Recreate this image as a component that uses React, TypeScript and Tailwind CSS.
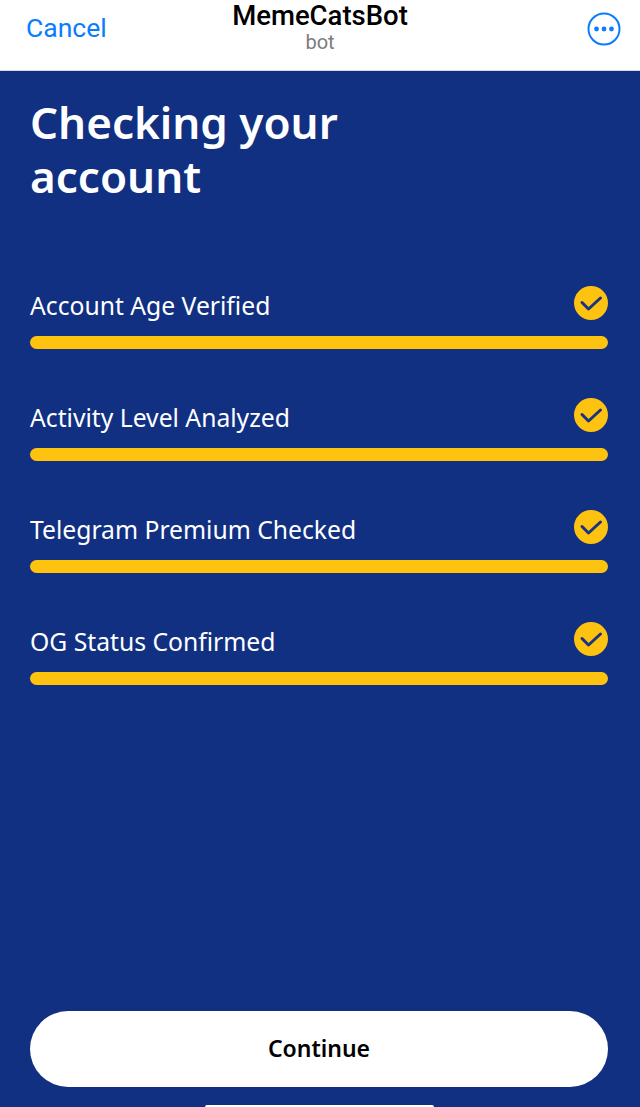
const steps = [
  'Account Age Verified',
  'Activity Level Analyzed',
  'Telegram Premium Checked',
  'OG Status Confirmed',
];

function CheckBadge() {
  return (
    <div className="w-[34px] h-[34px] rounded-full bg-[#fec30f]">
      <svg width="34" height="34" viewBox="0 0 34 34" fill="none">
        <path d="M8 16.5L14.5 23L26.5 12" stroke="#1a3384" strokeWidth="3" strokeLinecap="round" strokeLinejoin="round" />
      </svg>
    </div>
  );
}

export default function App() {
  return (
    <div className="w-[640px] h-[1107px] flex flex-col overflow-hidden bg-[#113082] font-['Noto_Sans',sans-serif]">
      <header className="h-[71px] shrink-0 bg-white border-b border-[#d5d8e2] px-[19px] grid grid-cols-[1fr_auto_1fr] items-start font-['Roboto',sans-serif]">
        <span className="mt-[12px] ml-[7px] text-[26.5px] leading-[32px] text-[#0a7cff]">Cancel</span>
        <div className="flex flex-col items-center">
          <span className="text-[27.5px] leading-[32px] font-medium text-black">MemeCatsBot</span>
          <span className="-mt-[1px] text-[20px] leading-[22px] text-[#7c7c7c]">bot</span>
        </div>
        <svg className="mt-[12px] justify-self-end" width="34" height="34" viewBox="0 0 34 34" fill="none">
          <circle cx="17" cy="17" r="15.5" stroke="#0a7cff" strokeWidth="2" />
          <circle cx="9.5" cy="17" r="2.4" fill="#0a7cff" />
          <circle cx="17" cy="17" r="2.4" fill="#0a7cff" />
          <circle cx="24.5" cy="17" r="2.4" fill="#0a7cff" />
        </svg>
      </header>

      <main className="flex-1 flex flex-col pl-[30px] pr-[32px] pt-[24px]">
        <h1 className="text-[44px] leading-[54px] font-semibold text-white w-[360px]">
          Checking your account
        </h1>

        <div className="mt-[80px] flex flex-col gap-[46px]">
          {steps.map((step) => (
            <div key={step}>
              <div className="flex items-center justify-between">
                <span className="mt-[6px] text-[24.7px] leading-[34px] text-white">{step}</span>
                <CheckBadge />
              </div>
              <div className="mt-[13px] h-[13px] rounded-full bg-[#fec30f]" />
            </div>
          ))}
        </div>

        <button className="mt-auto mb-[20px] h-[76px] pb-[2px] rounded-full bg-white text-[23px] font-semibold text-black">
          Continue
        </button>
      </main>

      <div className="relative">
        <div className="absolute left-[205px] bottom-0 w-[229px] h-[2px] rounded-t bg-white" />
      </div>
    </div>
  );
}
